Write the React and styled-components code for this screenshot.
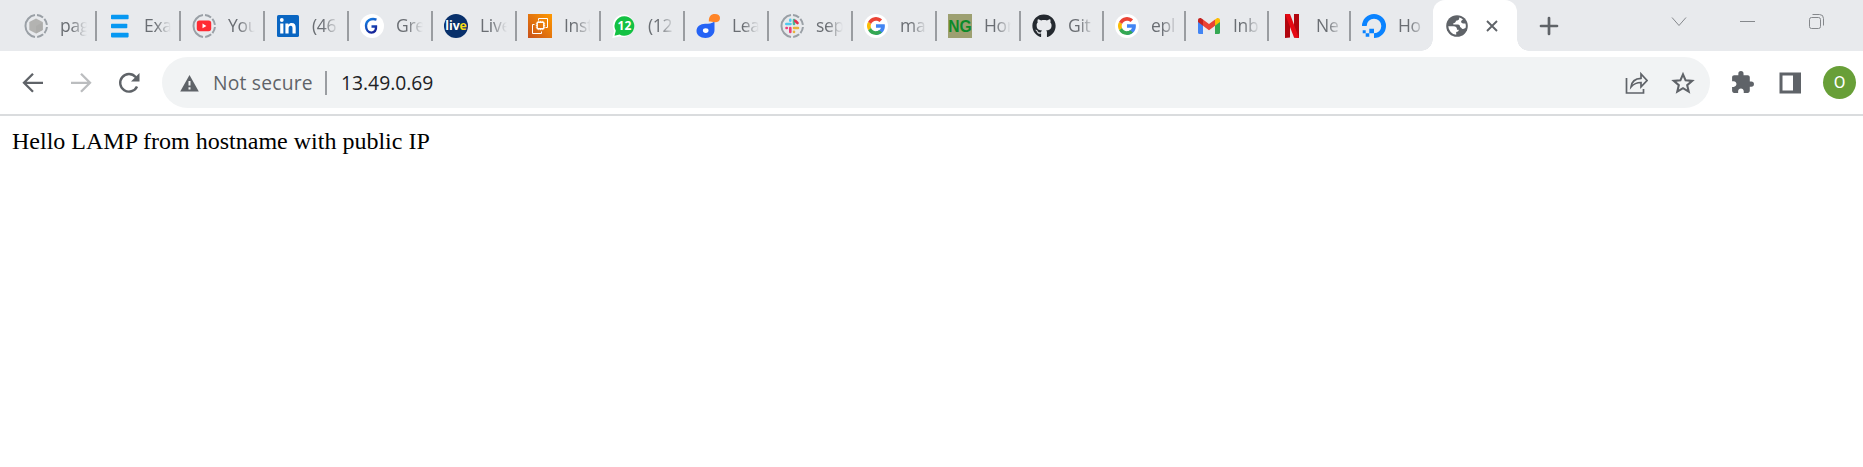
import React from "react";
import styled, { createGlobalStyle } from "styled-components";
import { FaGithub } from "react-icons/fa";
import { MdExtension } from "react-icons/md";

const GlobalStyle = createGlobalStyle`
  * { box-sizing: border-box; }
  body { margin: 0; background: #fff; overflow: hidden; }
`;

const Window = styled.div`
  width: 1863px;
  height: 467px;
  background: #fff;
  color: #5f6368;
  font-family: "Open Sans", "Noto Sans", sans-serif;
`;

const TabStrip = styled.div`
  display: flex;
  height: 51px;
  padding-left: 13px;
  background: #e8eaed;
`;

const Tab = styled.div`
  flex: none;
  display: flex;
  align-items: center;
  width: ${(p) => p.$width}px;
  padding-left: 11px;
`;

const Favicon = styled.svg`
  flex: none;
  display: block;
  width: 24px;
  height: 24px;
`;

const TabTitle = styled.span`
  flex: none;
  width: 27px;
  height: 28px;
  margin: -2px auto 0 ${(p) => p.$gap ?? 12}px;
  white-space: nowrap;
  font-size: 17.5px;
  line-height: 28px;
  letter-spacing: -0.3px;
  color: #6a6e73;
  mask-image: linear-gradient(to right, #000 40%, transparent 100%);
`;

const Separator = styled.i`
  flex: none;
  width: 2px;
  height: 30px;
  background: #9a9da1;
`;

const ActiveTab = styled.div`
  position: relative;
  flex: none;
  display: flex;
  align-items: center;
  gap: 17px;
  width: 84px;
  padding-left: 12px;
  background: #fff;
  border-radius: 12px 12px 0 0;
  &::before,
  &::after {
    content: "";
    position: absolute;
    bottom: 0;
    width: 12px;
    height: 12px;
  }
  &::before {
    left: -12px;
    background: radial-gradient(circle at 0 0, transparent 11.5px, #fff 12px);
  }
  &::after {
    right: -12px;
    background: radial-gradient(circle at 100% 0, transparent 11.5px, #fff 12px);
  }
`;

const Glyph = styled.svg`
  flex: none;
  display: block;
  width: ${(p) => p.$size}px;
  height: ${(p) => p.$size}px;
  fill: none;
  stroke: currentColor;
`;

const PuzzleGlyph = styled(MdExtension)`
  flex: none;
  width: 25px;
  height: 25px;
`;

const NewTab = styled.div`
  display: flex;
  align-items: center;
  margin-left: 22px;
`;

const WindowControls = styled.div`
  display: flex;
  gap: 52px;
  margin: 13px 38px 0 auto;
  color: #85888c;
`;

const Toolbar = styled.div`
  display: flex;
  align-items: center;
  height: 65px;
  padding: 6px 7px 6px 21px;
  border-bottom: 2px solid #dadcde;
`;

const Navigation = styled.div`
  display: flex;
  gap: 24px;
  width: 141px;
`;

const AddressBar = styled.div`
  display: flex;
  align-items: center;
  width: 1548px;
  height: 51px;
  padding: 0 15px 0 18px;
  border-radius: 26px;
  background: #f1f3f4;
  font-size: 19.3px;
  line-height: 28px;
  white-space: nowrap;
`;

const Security = styled.span`
  width: 112px;
  margin-left: 13px;
  letter-spacing: 0.2px;
`;

const AddressDivider = styled.i`
  width: 2px;
  height: 24px;
  background: #9a9da1;
`;

const Address = styled.span`
  margin-left: 14px;
  margin-right: auto;
  color: #202124;
`;

const AddressActions = styled.div`
  display: flex;
  align-items: center;
  gap: 23px;
`;

const ToolbarActions = styled.div`
  display: flex;
  align-items: center;
  margin-left: 20px;
  gap: 23px;
`;

const Avatar = styled.div`
  display: flex;
  align-items: center;
  justify-content: center;
  width: 33px;
  height: 33px;
  margin-left: -2px;
  border-radius: 50%;
  background: #689f38;
  color: #fff;
  font: 17px/33px Roboto, sans-serif;
`;

const Page = styled.main`
  padding: 11px 12px;
  font: 24px/28px "Liberation Serif", serif;
  color: #000;
`;

const DashedRing = () => (
  <g fill="none" stroke="#9aa0a6" strokeWidth="2">
    <path d="M11 22.9A11 11 0 0 1 11 1.1" />
    <path d="M13 1.05A11 11 0 0 1 22.95 11" strokeDasharray="6.6 1.8" />
    <path d="M22.95 13A11 11 0 0 1 13 22.95" strokeDasharray="6.6 1.8" />
  </g>
);

const CubeIcon = () => (
  <Favicon viewBox="0 0 24 24">
    <DashedRing />
    <path d="M12 4.600l6.700 3.500v8L12 19.600l-6.700-3.500v-8z" fill="#b3b3b1" />
    <path d="M12 12l6.700-3.800v7.900L12 19.600z" fill="#adadab" />
  </Favicon>
);

const BarsIcon = () => (
  <Favicon viewBox="0 0 24 24" fill="#0798f2">
    <rect x="3" y="0.700" width="17.600" height="4.600" rx="0.800" />
    <rect x="3" y="9.800" width="16.300" height="4.400" rx="0.800" />
    <rect x="3" y="18.800" width="17.600" height="4.600" rx="0.800" />
  </Favicon>
);

const YouTubeIcon = () => (
  <Favicon viewBox="0 0 24 24">
    <DashedRing />
    <rect x="4.800" y="6.500" width="14.400" height="10.700" rx="2.600" fill="#ff2b33" />
    <path d="M10.500 9.600v4.600l3.900-2.300z" fill="#fff" />
  </Favicon>
);

const LinkedInIcon = () => (
  <Favicon viewBox="0 0 24 24">
    <rect x="1" y="1" width="22" height="22" rx="1.600" fill="#0a66c2" />
    <g fill="#fff">
      <circle cx="5.800" cy="6" r="1.900" />
      <path d="M4.200 9.400h3.200v10.200H4.200zM9.400 9.400h3v1.400c.7-1.100 1.800-1.700 3.300-1.700 3 0 4 1.900 4 4.700v5.800h-3.200v-5.200c0-1.500-.4-2.600-1.800-2.600-1.500 0-2.100 1.100-2.100 2.600v5.200H9.400z" />
    </g>
  </Favicon>
);

const BlueGIcon = () => (
  <Favicon viewBox="0 0 24 24">
    <defs>
      <linearGradient id="blueG" x1="0" y1="0" x2="0.500" y2="1">
        <stop offset="0" stopColor="#1685e8" />
        <stop offset="1" stopColor="#16269b" />
      </linearGradient>
    </defs>
    <circle cx="12" cy="12" r="12" fill="#fff" />
    <path d="M16.500 5.600C11 3.800 6 6.500 6 11.800c0 4.300 2.600 6.800 5.500 6.800 3 0 4.800-2.300 4.500-6.100h-4.500" fill="none" stroke="url(#blueG)" strokeWidth="2.400" />
  </Favicon>
);

const LiveIcon = () => (
  <Favicon viewBox="0 0 24 24">
    <circle cx="12" cy="12" r="12" fill="#08306b" />
    <g fontFamily="Open Sans" fontWeight="700" fontSize="12">
      <text x="1.200" y="16" fill="#fff" textLength="14.500" lengthAdjust="spacingAndGlyphs">liv</text>
      <text x="15.500" y="16" fill="#f8dd16" textLength="7.300" lengthAdjust="spacingAndGlyphs">e</text>
    </g>
  </Favicon>
);

const Ec2Icon = () => (
  <Favicon viewBox="0 0 24 24">
    <defs>
      <linearGradient id="orange" x1="0" y1="1" x2="1" y2="0">
        <stop offset="0" stopColor="#c8511b" />
        <stop offset="1" stopColor="#ff9900" />
      </linearGradient>
    </defs>
    <rect width="24" height="24" fill="url(#orange)" />
    <g fill="none" stroke="#fff" strokeWidth="1">
      <path d="M10.500 6.500v-2h9v9h-2M6.500 10.500h-2v9h9v-2" />
      <rect x="9.200" y="8.200" width="6.600" height="6.600" rx="0.500" strokeWidth="1.400" />
      <path d="M10.800 6.800v1.400m1.700-1.400v1.400m1.700-1.400v1.400m-3.400 6.600v1.400m1.700-1.400v1.400m1.700-1.400v1.400M7.800 9.800h1.400m-1.400 1.700h1.400m-1.400 1.700h1.400m6.600-3.400h1.400m-1.400 1.700h1.400m-1.400 1.700h1.400" strokeWidth="0.800" />
    </g>
  </Favicon>
);

const WhatsAppIcon = () => (
  <Favicon viewBox="0 0 24 24">
    <path d="M12.500 .5A11.300 11.300 0 1 1 7.500 22.500L.3 24 2 17A11.300 11.300 0 0 1 12.500 .5z" fill="#fff" />
    <path d="M12.500 2.200a9.800 9.800 0 1 1-4.900 18.300L2.500 21.800l1.300-5A9.800 9.800 0 0 1 12.500 2.200z" fill="#13c143" />
    <text x="12.400" y="16.300" textAnchor="middle" fill="#fff" fontFamily="Open Sans" fontWeight="700" fontSize="12">12</text>
  </Favicon>
);

const LearnIcon = () => (
  <Favicon viewBox="0 0 24 24">
    <path d="M18.500 7.500v8.500c0 4.500-4 8-9 8-5.200 0-9-3-9-7 0-4.200 3.700-7.200 8.700-7.200 4 0 6.300-.3 9.300-2.300z" fill="#2563f5" />
    <ellipse cx="9.700" cy="16.600" rx="2.800" ry="2.300" fill="#fff" />
    <path d="M12.800 7.600C12.800 2.500 14.600 0 19 0c3 0 5 1.500 5 4 0 3-2 4.200-5 4.200-2.500 0-4-.6-6.200-.6z" fill="#ff8528" />
  </Favicon>
);

const SlackIcon = () => (
  <Favicon viewBox="0 0 24 24">
    <DashedRing />
    <g strokeWidth="2.600" strokeLinecap="round" fill="none">
      <path d="M6.300 10h4.200M10.300 5.900v.8" stroke="#51c9ef" />
      <path d="M14 6v4" stroke="#4bb795" />
      <path d="M15.200 6.800l2.300 2.200" stroke="#e2314f" />
      <path d="M14 14h4M14 17.700v.3" stroke="#e9b23b" />
      <path d="M10.300 14v4M6.500 14h.3" stroke="#ed3d79" />
    </g>
  </Favicon>
);

const GoogleIcon = () => (
  <Favicon viewBox="0 0 24 24">
    <circle cx="12" cy="12" r="12" fill="#fff" />
    <g transform="translate(1.300 1.300) scale(.445)">
      <path d="M43.600 20H24v8h11.300C33.700 32.700 29.200 36 24 36v8c11 0 20-8 20-20 0-1.300-.1-2.700-.4-4z" fill="#4285f4" />
      <path d="M6.300 33.500C9.600 39.800 16.300 44 24 44c5.200 0 9.900-2 13.400-5.200l-6.200-5.200C29.200 35.100 26.700 36 24 36c-5.200 0-9.600-3.300-11.300-7.900z" fill="#34a853" />
      <path d="M6.300 14.700a20 20 0 0 0 0 18.800l6.500-5.100a12 12 0 0 1 .1-8.900z" fill="#fbbc04" />
      <path d="M6.300 14.700l6.600 4.800C14.700 15.100 19 12 24 12c3.100 0 5.800 1.200 8 3l5.700-5.700A20 20 0 0 0 6.300 14.700z" fill="#ea4335" />
    </g>
  </Favicon>
);

const NgIcon = () => (
  <Favicon viewBox="0 0 24 24">
    <rect width="24" height="24" fill="#9da071" />
    <text x="0.300" y="17.800" fill="#0c8a29" fontFamily="Liberation Sans" fontWeight="700" fontSize="16.500" textLength="23.400" lengthAdjust="spacingAndGlyphs">NG</text>
  </Favicon>
);

const GitHubIcon = () => <Favicon as={FaGithub} color="#24292f" />;

const GmailIcon = () => (
  <Favicon viewBox="0 0 24 24">
    <path d="M1 7l5 3.500V20H2.500A1.500 1.500 0 0 1 1 18.500z" fill="#4285f4" />
    <path d="M23 7l-5 3.500V20h3.500a1.500 1.500 0 0 0 1.500-1.500z" fill="#34a853" />
    <path d="M18 5.500l1.500-1.100C21 3.300 23 4.300 23 6.200V8l-5 3.800z" fill="#fbbc04" />
    <path d="M1 8V6.200c0-1.900 2-2.900 3.500-1.800L6 5.500v6.300z" fill="#c5221f" />
    <path d="M6 5.500l6 4.600 6-4.600v6.300l-6 4.500-6-4.500z" fill="#ea4335" />
  </Favicon>
);

const NetflixIcon = () => (
  <Favicon viewBox="0 0 24 24">
    <path d="M5 0h5v23.500L5 24zM14 0h5v24l-5-.5z" fill="#b1060f" />
    <path d="M5 0h5l9 24-5-.5z" fill="#e50914" />
  </Favicon>
);

const DigitalOceanIcon = () => (
  <Favicon viewBox="0 0 24 24" fill="#0a83ff">
    <path d="M12 24v-4.700A7.300 7.300 0 1 0 4.700 12H0A12 12 0 1 1 12 24z" />
    <path d="M7.300 14.700H12v4.600H7.300zM3.700 19.300h3.600v3.500H3.700zM.7 16.300h3v3h-3z" />
  </Favicon>
);

const GlobeIcon = () => (
  <Favicon viewBox="0 0 24 24">
    <circle cx="12" cy="12" r="10.800" fill="#5f6368" />
    <g fill="#fff">
      <path d="M3.300 12.300h5.200c2.600 0 3.600 1.200 3.500 3.400h1.800c0 1.800-1.300 2-2.600 2.200v2.800A8.700 8.700 0 0 1 3.300 12.300z" />
      <path d="M14.200 3.600v.9c0 1.600-1.500 2-3.200 2.200-.3 1.800-1 2.200-2.700 2.500v1.300h4.600c1.700 0 2 1 2.200 2.500 1.300.3 1.300 1.800 2.800 2.100 1.200.1 1.700-.9 2.600-1 .6-1.900.3-3.500-.1-4.600h-2.100c-1.600 0-2.200-.8-2.200-1.900 0-1.200.9-1.600 1.900-2.200a8.700 8.700 0 0 0-3.800-1.800z" />
    </g>
  </Favicon>
);

const tabs = [
  { title: "pag", icon: CubeIcon },
  { title: "Exa", icon: BarsIcon },
  { title: "You", icon: YouTubeIcon },
  { title: "(46", icon: LinkedInIcon },
  { title: "Gre", icon: BlueGIcon },
  { title: "Live", icon: LiveIcon },
  { title: "Inst", icon: Ec2Icon },
  { title: "(12", icon: WhatsAppIcon },
  { title: "Lea", icon: LearnIcon },
  { title: "sep", icon: SlackIcon },
  { title: "ma", icon: GoogleIcon },
  { title: "Hor", icon: NgIcon },
  { title: "Git", icon: GitHubIcon, width: 83 },
  { title: "epl", icon: GoogleIcon, width: 82 },
  { title: "Inb", icon: GmailIcon, width: 83 },
  { title: "Ne", icon: NetflixIcon, width: 82 },
  { title: "Ho", icon: DigitalOceanIcon, last: true, width: 82 },
];

export default function App() {
  return (
    <Window>
      <GlobalStyle />
      <TabStrip>
        {tabs.map(({ title, icon: Icon, width = 84, gap, last }, i) => (
          <Tab key={i} $width={width}>
            <Icon />
            <TabTitle $gap={gap}>{title}</TabTitle>
            {!last && <Separator />}
          </Tab>
        ))}
        <ActiveTab>
          <GlobeIcon />
          <Glyph $size={12} viewBox="0 0 12 12" strokeWidth="1.900">
            <path d="M1 1l10 10M11 1L1 11" />
          </Glyph>
        </ActiveTab>
        <NewTab>
          <Glyph $size={20} viewBox="0 0 20 20" strokeWidth="2.700" strokeLinecap="round">
            <path d="M10 2v16M2 10h16" />
          </Glyph>
        </NewTab>
        <WindowControls>
          <Glyph $size={17} viewBox="0 0 17 17">
            <path d="M2 4.500l7 8 7-8" />
          </Glyph>
          <Glyph $size={17} viewBox="0 0 17 17">
            <path d="M1 8.500h15" />
          </Glyph>
          <Glyph $size={17} viewBox="0 0 17 17">
            <rect x="1.500" y="4.500" width="11" height="11" rx="2" />
            <path d="M4.500 1.500h7a4 4 0 0 1 4 4v7" />
          </Glyph>
        </WindowControls>
      </TabStrip>
      <Toolbar>
        <Navigation>
          <Glyph $size={24} viewBox="0 0 24 24" strokeWidth="2.300">
            <path d="M22 11.800H3.500M12 2.800l-9 9 9 9" />
          </Glyph>
          <Glyph $size={24} viewBox="0 0 24 24" strokeWidth="2.300" color="#bbbdbf">
            <path d="M2 11.800h18.500M12 2.800l9 9-9 9" />
          </Glyph>
          <Glyph $size={24} viewBox="0 0 24 24" strokeWidth="2.400">
            <path d="M20 15.500A8.800 8.800 0 1 1 18.600 6l2 2" />
            <path d="M22.500 2v8.500H14z" fill="currentColor" stroke="none" />
          </Glyph>
        </Navigation>
        <AddressBar>
          <Glyph $size={20} viewBox="0 0 20 20">
            <path d="M9.500 2L18.800 18.500H.2z" fill="currentColor" stroke="none" />
            <path d="M9.500 8v4.500M9.500 14.200v2.200" stroke="#f1f3f4" strokeWidth="2" />
          </Glyph>
          <Security>Not secure</Security>
          <AddressDivider />
          <Address>13.49.0.69</Address>
          <AddressActions>
            <Glyph $size={24} viewBox="0 0 24 24" strokeWidth="1.700">
              <path d="M2.500 7v15h17v-4" />
              <path d="M7 16c.7-6 4-8.500 10-8.700V3l6 6.500-6 6.300v-4.300c-4 0-7 1-10 4.500z" />
            </Glyph>
            <Glyph $size={24} viewBox="0 0 24 24" strokeWidth="2.100">
              <path d="M12 3.300l2.600 6 6.600.6-5 4.300 1.500 6.400-5.700-3.400-5.700 3.400 1.500-6.400-5-4.300 6.600-.6z" />
            </Glyph>
          </AddressActions>
        </AddressBar>
        <ToolbarActions>
          <PuzzleGlyph />
          <Glyph $size={24} viewBox="0 0 24 24">
            <path d="M1.500 1.500h21.500v21h-21.500zM4.500 4.500v15h10.500v-15z" fill="currentColor" fillRule="evenodd" stroke="none" />
          </Glyph>
          <Avatar>O</Avatar>
        </ToolbarActions>
      </Toolbar>
      <Page>Hello LAMP from hostname with public IP</Page>
    </Window>
  );
}
